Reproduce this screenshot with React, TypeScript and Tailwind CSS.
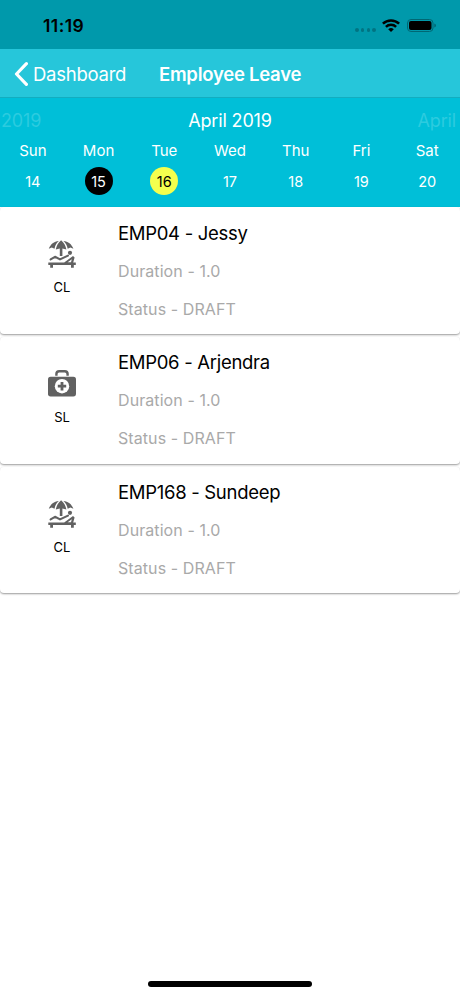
type Leave = {
  employee: string
  type: 'CL' | 'SL'
  duration: string
  status: string
}

const days = [
  { name: 'Sun', date: 14, style: 'text-white' },
  { name: 'Mon', date: 15, style: 'bg-black text-white' },
  { name: 'Tue', date: 16, style: 'bg-[#f4ff4e] text-black' },
  { name: 'Wed', date: 17, style: 'text-white' },
  { name: 'Thu', date: 18, style: 'text-white' },
  { name: 'Fri', date: 19, style: 'text-white' },
  { name: 'Sat', date: 20, style: 'text-white' },
]

const leaves: Leave[] = [
  { employee: 'EMP04 - Jessy', type: 'CL', duration: '1.0', status: 'DRAFT' },
  { employee: 'EMP06 - Arjendra', type: 'SL', duration: '1.0', status: 'DRAFT' },
  { employee: 'EMP168 - Sundeep', type: 'CL', duration: '1.0', status: 'DRAFT' },
]

function BeachIcon() {
  return (
    <svg viewBox="0 0 28 28" className="size-7" fill="#616161" aria-hidden="true">
      <path d="M0.8 8.8C2.6 4.2 6 1.6 10.8 1.1C8.6 3.2 7.2 5.4 6.5 8.8L3.8 7.6Z" />
      <path d="M13.1 0.3C16 2.9 17.6 5.6 18.4 9.4L14.4 8.6V16H11.8V8.6L7.8 9.4C8.6 5.6 10.2 2.9 13.1 0.3Z" />
      <path d="M15.4 1.1C20.2 1.6 23.6 4.2 25.4 8.8L22.4 7.6L19.7 8.8C19 5.4 17.6 3.2 15.4 1.1Z" />
      <circle cx="22" cy="12.8" r="2.1" />
      <path
        d="M2.6 19.4L7 16.8L12 19.4L20 15.6"
        fill="none"
        stroke="#616161"
        strokeWidth="2.1"
        strokeLinecap="round"
        strokeLinejoin="round"
      />
      <path d="M0.3 22.4H16.2L25 16L26.6 17.6L25.2 22.4H27.8V25H25.8V27.7H23V25H5V27.7H2.2V25H0.3Z" />
      <path d="M19.6 22.2L23.8 19.2L23 22.2Z" fill="white" />
    </svg>
  )
}

function MedicalBagIcon() {
  return (
    <svg viewBox="0 0 28 28" className="size-7" aria-hidden="true">
      <path
        d="M8.4 5.8V4Q8.4 1.2 11.2 1.2H16.8Q19.6 1.2 19.6 4V5.8"
        fill="none"
        stroke="#616161"
        strokeWidth="2.4"
      />
      <rect x="0" y="6.8" width="28" height="19.6" rx="2.6" fill="#616161" />
      <circle cx="14" cy="16.2" r="7.2" fill="white" />
      <path d="M12.6 12H15.4V14.8H18.2V17.6H15.4V20.4H12.6V17.6H9.8V14.8H12.6Z" fill="#616161" />
    </svg>
  )
}

function StatusBar() {
  return (
    <div className="flex h-[49px] items-start justify-between bg-[#0099ab] pr-[24px] pl-[43px]">
      <span className="mt-[15px] text-[17.5px] leading-[22px] font-semibold tracking-[0.45px]">11:19</span>
      <div className="flex h-[50px] items-center">
        <div className="mt-[10px] mr-[6px] flex gap-[2.2px]">
          <i className="size-[3.6px] rounded-full bg-[#007482]" />
          <i className="size-[3.6px] rounded-full bg-[#007482]" />
          <i className="size-[3.6px] rounded-full bg-[#007482]" />
          <i className="size-[3.6px] rounded-full bg-[#007482]" />
        </div>
        <svg viewBox="0 0 18 13" className="mr-[7px] h-[13px] w-[18px]" fill="none" stroke="black" strokeWidth="2.5">
          <path d="M0.9 4.7A11.6 11.6 0 0 1 17.1 4.7" />
          <path d="M3.9 7.8A7.3 7.3 0 0 1 14.1 7.8" />
          <path d="M6.2 10.3A4 4 0 0 1 11.8 10.3L9 13Z" fill="black" stroke="none" />
        </svg>
        <svg viewBox="0 0 29 13" className="h-[13px] w-[29px]">
          <rect x="0.5" y="0.5" width="25.5" height="12" rx="3.5" fill="none" stroke="#006773" />
          <rect x="2" y="2" width="22.5" height="9" rx="2" fill="black" />
          <path d="M27.3 4.4Q29 5 29 6.5Q29 8 27.3 8.6Z" fill="#006773" />
        </svg>
      </div>
    </div>
  )
}

function NavBar() {
  return (
    <header className="flex h-[49px] items-center border-b border-[#12adc0] bg-[#26c6da] pt-px text-white">
      <button type="button" className="flex items-center pl-[14px]">
        <svg viewBox="0 0 14 24" className="mr-[5px] h-6 w-[14px]" fill="none" stroke="white" strokeWidth="3.2">
          <path d="M12.4 1.7L2.5 12L12.4 22.3" strokeLinecap="round" strokeLinejoin="round" />
        </svg>
        <span className="w-[126px] text-left text-[18.5px] leading-6 tracking-[-0.25px]">Dashboard</span>
      </button>
      <h1 className="text-[18.5px] leading-6 font-semibold tracking-[-0.25px] whitespace-nowrap">Employee Leave</h1>
    </header>
  )
}

function WeekCalendar() {
  return (
    <section className="h-[109px] bg-[#00bfd8] pt-[11px] text-white">
      <div className="grid grid-cols-[1fr_auto_1fr] pr-[4px] pl-px text-[18px] leading-6 tracking-[-0.15px]">
        <span className="text-[#2ccbdf]">2019</span>
        <span className="pl-[3px] text-center">April 2019</span>
        <span className="text-right text-[#2ccbdf]">April</span>
      </div>
      <div className="mt-[7px] grid grid-cols-7">
        {days.map((day) => (
          <div key={day.name} className="flex flex-col items-center">
            <span className="text-[15px] leading-[22px]">{day.name}</span>
            <span
              className={`mt-[5px] flex size-7 items-center justify-center rounded-full pt-px text-[14.5px] ${day.style}`}
            >
              {day.date}
            </span>
          </div>
        ))}
      </div>
    </section>
  )
}

function LeaveCard({ leave }: { leave: Leave }) {
  return (
    <article className="mb-[3px] flex h-[126.8px] rounded-[4px] bg-white shadow-[0_1px_2px_rgba(0,0,0,0.4)]">
      <div className="flex w-[118px] flex-col items-center pt-[33px] pl-[6px]">
        {leave.type === 'CL' ? <BeachIcon /> : <MedicalBagIcon />}
        <span className="mt-[10px] text-[13px] leading-[18px]">{leave.type}</span>
      </div>
      <div className="pt-[13.6px]">
        <h2 className="text-[18.5px] leading-6 tracking-[-0.3px]">{leave.employee}</h2>
        <p className="mt-[14px] text-[16px] leading-6 tracking-[0.08px] text-[#a9a9a9]">Duration - {leave.duration}</p>
        <p className="mt-[14px] text-[16px] leading-6 tracking-[0.08px] text-[#a9a9a9]">Status - {leave.status}</p>
      </div>
    </article>
  )
}

export default function App() {
  return (
    <div className="flex h-[996px] w-[460px] flex-col overflow-hidden bg-white font-['Inter',sans-serif] text-black">
      <StatusBar />
      <NavBar />
      <WeekCalendar />
      <main className="flex-1">
        {leaves.map((leave) => (
          <LeaveCard key={leave.employee} leave={leave} />
        ))}
      </main>
      <div className="mx-auto mb-[9px] h-[6px] w-[164px] rounded-full bg-black" />
    </div>
  )
}
